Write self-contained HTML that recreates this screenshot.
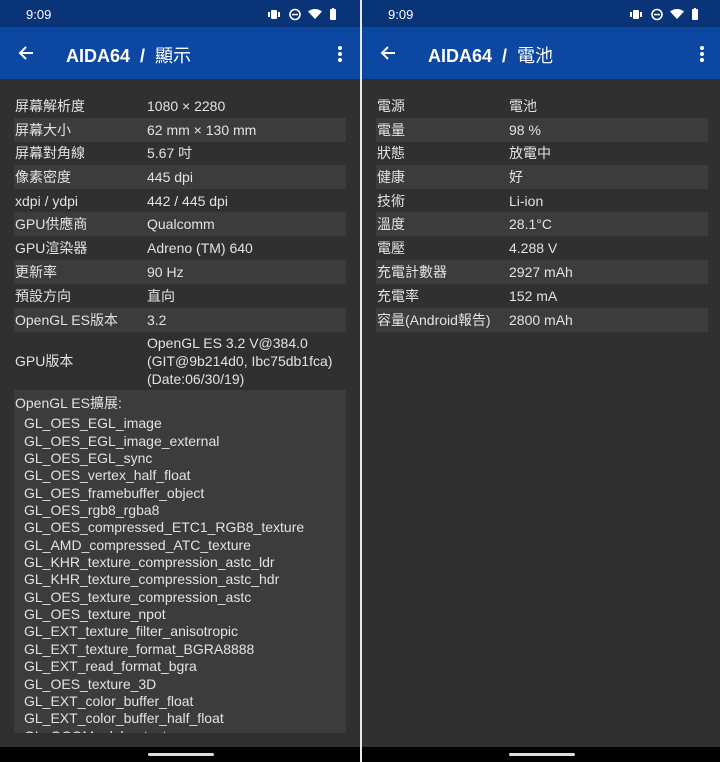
<!DOCTYPE html>
<html><head><meta charset="utf-8"><style>
*{margin:0;padding:0;box-sizing:border-box}
body{width:720px;height:762px;background:#303030;font-family:"Liberation Sans","Noto Sans CJK TC",sans-serif;color:#e2e2e2;position:relative;overflow:hidden}
.p{position:absolute;top:0;width:360px;height:762px;background:#303030;overflow:hidden}
.sb{position:absolute;left:0;top:0;width:100%;height:27px;background:#0a3478}
.tb{position:absolute;left:0;top:27px;width:100%;height:52px;background:#0c47a2}
.time{position:absolute;left:26px;top:7px;font-size:13px;color:#fff}
.title{position:absolute;left:66px;top:15px;font-size:18px;font-weight:bold;color:#fff}
.title span{font-weight:normal}
.row{position:absolute;left:14px;width:332px;height:24px;font-size:14px;line-height:24px}
.row.s{background:#3c3c3c}
.row .l{position:absolute;left:1px}
.row .v{position:absolute;left:133px}
.nav{position:absolute;left:0;top:747px;width:100%;height:15px;background:#000}
.nav i{position:absolute;left:148px;top:6px;width:66px;height:3px;background:#ddd;border-radius:2px}
.ext{position:absolute;left:14px;top:390px;width:332px;height:343px;background:#3c3c3c;font-size:14px;line-height:17.35px;padding:5px 0 0 1px;overflow:hidden}
.ext div{padding-left:9px}
.ext div:first-child{margin-top:3px}
</style></head><body>
<div class="p" style="left:0">
<div class="sb"><div class="time">9:09</div>
<svg style="position:absolute;left:268px;top:8px" width="72" height="13" viewBox="0 0 72 13" fill="#fff"><rect x="3" y="2" width="6" height="9" rx="1"/><rect x="0" y="4" width="2" height="5"/><rect x="10" y="4" width="2" height="5"/><circle cx="27" cy="6.5" r="5" fill="none" stroke="#fff" stroke-width="1.6"/><rect x="24" y="5.8" width="6" height="1.5"/><path d="M40 3.5 Q47 -1.5 54 3.5 L47 11 Z"/><rect x="62" y="1" width="6" height="11" rx="1"/><rect x="64" y="0" width="2" height="2"/></svg></div>
<div class="tb"><svg style="position:absolute;left:18px;top:18px" width="16" height="16" viewBox="0 0 16 16"><path d="M15 8H2M8 2L2 8l6 6" stroke="#fff" stroke-width="2" fill="none"/></svg>
<div class="title">AIDA64 &nbsp;/ &nbsp;<span>顯示</span></div>
<svg style="position:absolute;left:337px;top:18px" width="6" height="18"><circle cx="3" cy="3" r="2" fill="#fff"/><circle cx="3" cy="9" r="2" fill="#fff"/><circle cx="3" cy="15" r="2" fill="#fff"/></svg></div>
<div class="row" style="top:94px"><span class="l">屏幕解析度</span><span class="v">1080 × 2280</span></div>
<div class="row s" style="top:118px"><span class="l">屏幕大小</span><span class="v">62 mm × 130 mm</span></div>
<div class="row" style="top:141px"><span class="l">屏幕對角線</span><span class="v">5.67 吋</span></div>
<div class="row s" style="top:165px"><span class="l">像素密度</span><span class="v">445 dpi</span></div>
<div class="row" style="top:189px"><span class="l">xdpi / ydpi</span><span class="v">442 / 445 dpi</span></div>
<div class="row s" style="top:212px"><span class="l">GPU供應商</span><span class="v">Qualcomm</span></div>
<div class="row" style="top:236px"><span class="l">GPU渲染器</span><span class="v">Adreno (TM) 640</span></div>
<div class="row s" style="top:260px"><span class="l">更新率</span><span class="v">90 Hz</span></div>
<div class="row" style="top:284px"><span class="l">預設方向</span><span class="v">直向</span></div>
<div class="row s" style="top:308px"><span class="l">OpenGL ES版本</span><span class="v">3.2</span></div>
<div class="row" style="top:331px;height:59px"><span class="l" style="top:18px">GPU版本</span><span class="v" style="top:3px;line-height:18px">OpenGL ES 3.2 V@384.0<br>(GIT@9b214d0, Ibc75db1fca)<br>(Date:06/30/19)</span></div>
<div class="ext">OpenGL ES擴展:
<div>GL_OES_EGL_image</div><div>GL_OES_EGL_image_external</div><div>GL_OES_EGL_sync</div><div>GL_OES_vertex_half_float</div><div>GL_OES_framebuffer_object</div><div>GL_OES_rgb8_rgba8</div><div>GL_OES_compressed_ETC1_RGB8_texture</div><div>GL_AMD_compressed_ATC_texture</div><div>GL_KHR_texture_compression_astc_ldr</div><div>GL_KHR_texture_compression_astc_hdr</div><div>GL_OES_texture_compression_astc</div><div>GL_OES_texture_npot</div><div>GL_EXT_texture_filter_anisotropic</div><div>GL_EXT_texture_format_BGRA8888</div><div>GL_EXT_read_format_bgra</div><div>GL_OES_texture_3D</div><div>GL_EXT_color_buffer_float</div><div>GL_EXT_color_buffer_half_float</div><div>GL_QCOM_alpha_test</div></div>
<div class="nav"><i></i></div>
</div>
<div style="position:absolute;left:360px;top:0;width:2px;height:762px;background:#e8e8e8"></div>
<div class="p" style="left:362px;width:358px">
<div class="sb"><div class="time">9:09</div>
<svg style="position:absolute;left:268px;top:8px" width="72" height="13" viewBox="0 0 72 13" fill="#fff"><rect x="3" y="2" width="6" height="9" rx="1"/><rect x="0" y="4" width="2" height="5"/><rect x="10" y="4" width="2" height="5"/><circle cx="27" cy="6.5" r="5" fill="none" stroke="#fff" stroke-width="1.6"/><rect x="24" y="5.8" width="6" height="1.5"/><path d="M40 3.5 Q47 -1.5 54 3.5 L47 11 Z"/><rect x="62" y="1" width="6" height="11" rx="1"/><rect x="64" y="0" width="2" height="2"/></svg></div>
<div class="tb"><svg style="position:absolute;left:18px;top:18px" width="16" height="16" viewBox="0 0 16 16"><path d="M15 8H2M8 2L2 8l6 6" stroke="#fff" stroke-width="2" fill="none"/></svg>
<div class="title">AIDA64 &nbsp;/ &nbsp;<span>電池</span></div>
<svg style="position:absolute;left:337px;top:18px" width="6" height="18"><circle cx="3" cy="3" r="2" fill="#fff"/><circle cx="3" cy="9" r="2" fill="#fff"/><circle cx="3" cy="15" r="2" fill="#fff"/></svg></div>
<div class="row" style="top:94px"><span class="l">電源</span><span class="v">電池</span></div>
<div class="row s" style="top:118px"><span class="l">電量</span><span class="v">98 %</span></div>
<div class="row" style="top:141px"><span class="l">狀態</span><span class="v">放電中</span></div>
<div class="row s" style="top:165px"><span class="l">健康</span><span class="v">好</span></div>
<div class="row" style="top:189px"><span class="l">技術</span><span class="v">Li-ion</span></div>
<div class="row s" style="top:212px"><span class="l">溫度</span><span class="v">28.1°C</span></div>
<div class="row" style="top:236px"><span class="l">電壓</span><span class="v">4.288 V</span></div>
<div class="row s" style="top:260px"><span class="l">充電計數器</span><span class="v">2927 mAh</span></div>
<div class="row" style="top:284px"><span class="l">充電率</span><span class="v">152 mA</span></div>
<div class="row s" style="top:308px"><span class="l">容量(Android報告)</span><span class="v">2800 mAh</span></div>
<div class="nav"><i style="left:147px"></i></div>
</div>
</body></html>
